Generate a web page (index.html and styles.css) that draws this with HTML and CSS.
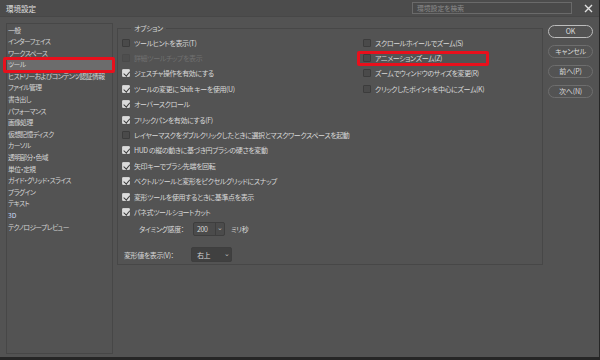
FILE: index.html
```html
<!DOCTYPE html>
<html lang="ja">
<head>
<meta charset="utf-8">
<title>環境設定</title>
<link rel="stylesheet" href="styles.css">
</head>
<body>
<div class="dialog">
  <header class="titlebar">
    <span class="title">環境設定</span>
    <div class="search">環境設定を検索</div>
    <svg class="close" width="9" height="9" viewBox="0 0 9 9"><path d="M1 1L8 8M8 1L1 8" stroke="#e0e0e0" stroke-width="1.4"/></svg>
  </header>
  <div class="main">
    <ul class="sidebar">
      <li>一般</li>
      <li>インターフェイス</li>
      <li>ワークスペース</li>
      <li class="selected"><span class="hl hl-side"></span>ツール</li>
      <li>ヒストリーおよびコンテンツ認証情報</li>
      <li>ファイル管理</li>
      <li>書き出し</li>
      <li>パフォーマンス</li>
      <li>画像処理</li>
      <li>仮想記憶ディスク</li>
      <li>カーソル</li>
      <li>透明部分・色域</li>
      <li>単位・定規</li>
      <li>ガイド・グリッド・スライス</li>
      <li>プラグイン</li>
      <li>テキスト</li>
      <li class="blue">3D</li>
      <li>テクノロジープレビュー</li>
    </ul>
    <fieldset class="options">
      <legend>オプション</legend>
      <div class="cols">
        <div class="col col-left">
          <div class="row"><span class="cb"></span>ツールヒントを表示(T)</div>
          <div class="row disabled"><span class="cb"></span>詳細ツールチップを表示</div>
          <div class="row"><span class="cb on"></span>ジェスチャ操作を有効にする</div>
          <div class="row"><span class="cb on"></span>ツールの変更に Shift キーを使用(U)</div>
          <div class="row"><span class="cb on"></span>オーバースクロール</div>
          <div class="row"><span class="cb on"></span>フリックパンを有効にする(F)</div>
          <div class="row"><span class="cb"></span>レイヤーマスクをダブルクリックしたときに選択とマスクワークスペースを起動</div>
          <div class="row"><span class="cb on"></span>HUD の縦の動きに基づき円ブラシの硬さを変動</div>
          <div class="row"><span class="cb on"></span>矢印キーでブラシ先端を回転</div>
          <div class="row"><span class="cb on"></span>ベクトルツールと変形をピクセルグリッドにスナップ</div>
          <div class="row"><span class="cb on"></span>変形ツールを使用するときに基準点を表示</div>
          <div class="row"><span class="cb on"></span>パネ式ツールショートカット</div>
          <div class="timing">
            <span class="tlabel">タイミング感度：</span>
            <div class="select sel-num"><span class="val">200</span><span class="div"></span><span class="chev">⌄</span></div>
            <span class="unit">ミリ秒</span>
          </div>
          <div class="transform">
            <span class="xlabel">変形値を表示(V)：</span>
            <div class="select sel-pos"><span class="val">右上</span><span class="chev">⌄</span></div>
          </div>
        </div>
        <div class="col col-right">
          <div class="row"><span class="cb"></span>スクロールホイールでズーム(S)</div>
          <div class="row"><span class="hl hl-opt"></span><span class="cb"></span>アニメーションズーム(Z)</div>
          <div class="row"><span class="cb"></span>ズームでウィンドウのサイズを変更(R)</div>
          <div class="row"><span class="cb"></span>クリックしたポイントを中心にズーム(K)</div>
        </div>
      </div>
    </fieldset>
    <div class="buttons">
      <button class="btn default">OK</button>
      <button class="btn">キャンセル</button>
      <button class="btn">前へ(P)</button>
      <button class="btn">次へ(N)</button>
    </div>
  </div>
</div>
</body>
</html>
```

FILE: styles.css
```css
* { box-sizing: border-box; }
html, body { margin: 0; padding: 0; }
body {
  width: 600px;
  height: 360px;
  background: #262626;
  font-family: "Noto Sans CJK JP", "Noto Sans", sans-serif;
  font-size: 7px;
  font-feature-settings: "palt" 1;
  letter-spacing: -0.4px;
  color: #d8d8d8;
  overflow: hidden;
}
.dialog {
  width: 599px;
  height: 357px;
  background: #535353;
  display: flex;
  flex-direction: column;
}
.titlebar {
  height: 17px;
  display: flex;
  align-items: center;
  padding: 0 6px;
  background: #4c4c4c;
  border-bottom: 1px solid #474747;
}
.title { font-size: 7.5px; letter-spacing: 0; color: #e0e0e0; }
.search {
  margin-left: auto;
  width: 160px;
  height: 12px;
  border: 1px solid #6a6a6a;
  background: #4a4a4a;
  color: #8a8a8a;
  font-size: 6.8px;
  letter-spacing: 0;
  line-height: 10px;
  padding-left: 4px;
}
.close { margin-left: 12px; margin-right: 0; }
.main {
  display: flex;
  align-items: flex-start;
  padding: 6px 0 0 6px;
}
.sidebar {
  list-style: none;
  margin: 0;
  padding: 0.5px 0 0 0;
  width: 107px;
  height: 331px;
  border: 1px solid #474747;
}
.sidebar li {
  position: relative;
  height: 11.6px;
  line-height: 11.6px;
  padding-left: 1px;
  font-size: 6.8px;
  letter-spacing: -0.62px;
  white-space: nowrap;
  color: #d4d4d4;
}
.sidebar li.selected { background: #6c6c6c; }
.sidebar li.blue { color: #c9d8f4; letter-spacing: 0; }
.hl {
  position: absolute;
  border: 3px solid #e8101c;
  border-radius: 2px;
}
.hl-side { left: -4px; right: -3px; top: -2px; bottom: -2px; }
.options {
  margin: 0 0 0 4px;
  padding: 2px 0 0 4px;
  width: 426px;
  height: 242px;
  border: 1px solid #474747;
  min-width: 0;
}
.options legend {
  margin-left: 9px;
  padding: 0 3px;
  line-height: 10px;
  height: 10px;
  color: #d8d8d8;
}
.cols { display: flex; }
.col-left { width: 241px; flex: none; }
.row {
  position: relative;
  height: 15.4px;
  display: flex;
  align-items: center;
  white-space: nowrap;
}
.row.disabled { color: #707070; }
.cb {
  position: relative;
  flex: none;
  width: 8px;
  height: 8px;
  margin-right: 4px;
  border: 1px solid #3c3c3c;
  background: #4a4a4a;
  border-radius: 1px;
}
.disabled .cb { border-color: #4a4a4a; background: #4e4e4e; }
.cb.on { background: #dcdcdc; border-color: #cfcfcf; }
.cb.on::after {
  content: "";
  position: absolute;
  left: 1.5px;
  top: 0px;
  width: 2.5px;
  height: 4.5px;
  border-right: 1.3px solid #3a3a3a;
  border-bottom: 1.3px solid #3a3a3a;
  transform: rotate(40deg);
}
.hl-opt { left: -6px; top: 1px; width: 132px; height: 15px; }
.timing {
  height: 18px;
  display: flex;
  align-items: center;
  padding-left: 17px;
  white-space: nowrap;
}
.tlabel { width: 54px; flex: none; }
.select {
  display: flex;
  align-items: center;
  height: 14px;
  border: 1px solid #3e3e3e;
  border-radius: 2px;
  position: relative;
  flex: none;
}
.sel-num { width: 32px; background: #4b4b4b; padding-left: 3px; }
.sel-num .div { width: 1px; height: 12px; background: #3e3e3e; margin-left: auto; }
.sel-num .chev { width: 8px; }
.unit { margin-left: 6px; }
.chev {
  font-size: 7px;
  line-height: 7px;
  letter-spacing: 0;
  color: #bbbbbb;
  text-align: center;
  margin-top: -3px;
}
.transform {
  margin-top: 9px;
  height: 16px;
  display: flex;
  align-items: center;
  padding-left: 2px;
  white-space: nowrap;
}
.xlabel { width: 67px; flex: none; }
.sel-pos { width: 41px; height: 15px; background: #404040; padding-left: 5px; }
.sel-pos .chev { margin-left: auto; width: 9px; }
.col-right { flex: 1; }
.buttons {
  margin-left: 5px;
  margin-top: 2px;
  display: flex;
  flex-direction: column;
  gap: 7px;
}
.btn {
  width: 45px;
  height: 13px;
  padding: 0;
  border-radius: 7px;
  border: 1px solid #6e6e6e;
  background: transparent;
  color: #dcdcdc;
  font-family: "Noto Sans CJK JP", "Noto Sans", sans-serif;
  font-feature-settings: "palt" 1;
  font-size: 7px;
  letter-spacing: -0.2px;
  line-height: 11px;
}
.btn.default { border: 1.5px solid #bdbdbd; }
```
